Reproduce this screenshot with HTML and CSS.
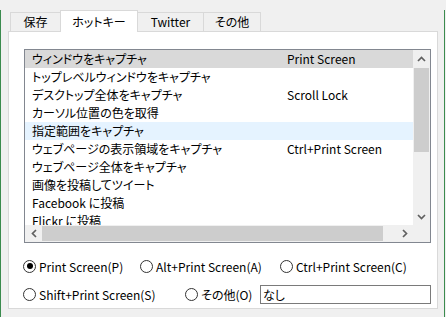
FILE: index.html
```html
<!DOCTYPE html>
<html lang="ja">

<head>
    <meta charset="UTF-8">
    <meta name="viewport" content="width=device-width, initial-scale=1.0">
    <title>ホットキー</title>
    <link rel="stylesheet" href="styles.css">
</head>

<body>
    <div class="window">
        <div class="tabs">
            <div class="tab tab-save">保存</div>
            <div class="tab tab-hotkey active">ホットキー</div>
            <div class="tab tab-twitter">Twitter</div>
            <div class="tab tab-other">その他</div>
        </div>

        <div class="panel">
            <div class="listbox">
                <div class="rows">
                    <div class="row selected"><span>ウィンドウをキャプチャ</span><span>Print Screen</span></div>
                    <div class="row"><span>トップレベルウィンドウをキャプチャ</span><span></span></div>
                    <div class="row"><span>デスクトップ全体をキャプチャ</span><span>Scroll Lock</span></div>
                    <div class="row"><span>カーソル位置の色を取得</span><span></span></div>
                    <div class="row hover"><span>指定範囲をキャプチャ</span><span></span></div>
                    <div class="row"><span>ウェブページの表示領域をキャプチャ</span><span>Ctrl+Print Screen</span></div>
                    <div class="row"><span>ウェブページ全体をキャプチャ</span><span></span></div>
                    <div class="row"><span>画像を投稿してツイート</span><span></span></div>
                    <div class="row"><span>Facebook に投稿</span><span></span></div>
                    <div class="row"><span>Flickr に投稿</span><span></span></div>
                </div>

                <!-- 縦スクロールバー -->
                <div class="vscroll">
                    <div class="sb-btn">
                        <svg width="9" height="6" viewBox="0 0 9 6"><polyline points="1,5 4.5,1.5 8,5" /></svg>
                    </div>
                    <div class="vtrack"><div class="vthumb"></div></div>
                    <div class="sb-btn">
                        <svg width="9" height="6" viewBox="0 0 9 6"><polyline points="1,1 4.5,4.5 8,1" /></svg>
                    </div>
                </div>

                <!-- 横スクロールバー -->
                <div class="hscroll">
                    <div class="sb-btn">
                        <svg width="6" height="9" viewBox="0 0 6 9"><polyline points="5,1 1.5,4.5 5,8" /></svg>
                    </div>
                    <div class="htrack"><div class="hthumb"></div></div>
                    <div class="sb-btn">
                        <svg width="6" height="9" viewBox="0 0 6 9"><polyline points="1,1 4.5,4.5 1,8" /></svg>
                    </div>
                </div>

                <div class="corner"></div>
            </div>

            <div class="options">
                <div class="opt-row">
                    <label class="opt opt-p"><span class="radio checked"></span>Print Screen(P)</label>
                    <label class="opt opt-a"><span class="radio"></span>Alt+Print Screen(A)</label>
                    <label class="opt"><span class="radio"></span>Ctrl+Print Screen(C)</label>
                </div>
                <div class="opt-row">
                    <label class="opt opt-s"><span class="radio"></span>Shift+Print Screen(S)</label>
                    <label class="opt opt-o"><span class="radio"></span>その他(O)</label>
                    <div class="textbox">なし</div>
                </div>
            </div>
        </div>
    </div>
</body>

</html>
```

FILE: styles.css
```css
* {
    box-sizing: border-box;
}

body {
    margin: 0;
    background-color: #f0f0f0;
    font-family: "Noto Sans CJK JP", "Noto Sans", sans-serif;
    font-size: 12px;
    font-feature-settings: "palt";
    color: #000000;
}

.window {
    width: 445px;
    height: 316px;
    border: 1px solid #3b8b4e;
    border-top: none;
    background-color: #f0f0f0;
}

/* タブ */
.tabs {
    display: flex;
    align-items: flex-end;
    height: 22px;
    margin: 10px 0 -1px 9px;
    position: relative;
    z-index: 1;
}

.tab {
    height: 20px;
    line-height: 18px;
    text-align: center;
    border: 1px solid #d9d9d9;
    background-color: #f0f0f0;
    margin-left: -1px;
}

.tab:first-child {
    margin-left: 0;
}

.tab.active {
    height: 22px;
    line-height: 21px;
    background-color: #ffffff;
    border-bottom: none;
    position: relative;
    z-index: 1;
}

.tab-save    { width: 51px; }
.tab-hotkey  { width: 78px; }
.tab-twitter { width: 67px; }
.tab-other   { width: 58px; }

.panel {
    width: 430px;
    height: 278px;
    margin-left: 7px;
    background-color: #ffffff;
    border: 1px solid #d9d9d9;
    padding: 17px 0 0 15px;
}

/* リスト */
.listbox {
    width: 407px;
    height: 194px;
    border: 1px solid #828790;
    display: grid;
    grid-template-columns: 388px 17px;
    grid-template-rows: 175px 17px;
    background-color: #ffffff;
}

.rows {
    overflow: hidden;
}

.row {
    display: grid;
    grid-template-columns: 255px auto;
    height: 18px;
    line-height: 18px;
    padding-left: 7px;
    white-space: nowrap;
}

.row.selected {
    background-color: #d9d9d9;
}

.row.hover {
    background-color: #e5f3ff;
}

.vscroll, .hscroll, .corner {
    background-color: #f0f0f0;
}

.vscroll {
    display: flex;
    flex-direction: column;
}

.hscroll {
    display: flex;
}

.sb-btn {
    width: 17px;
    height: 17px;
    display: flex;
    align-items: center;
    justify-content: center;
    flex: none;
}

.sb-btn svg polyline {
    fill: none;
    stroke: #606060;
    stroke-width: 1.7;
}

.vtrack {
    flex: 1;
    padding: 1px 1px 0 1px;
}

.vthumb {
    height: 84px;
    background-color: #cdcdcd;
}

.htrack {
    flex: 1;
    padding: 1px 0 1px 0;
}

.hthumb {
    width: 341px;
    height: 15px;
    background-color: #cdcdcd;
}

/* ラジオボタン */
.options {
    margin: 14px 0 0 -1px;
    display: flex;
    flex-direction: column;
    gap: 10px;
}

.opt-row {
    display: flex;
    align-items: center;
    height: 18px;
}

.opt {
    display: flex;
    align-items: center;
    gap: 3px;
    white-space: nowrap;
}

.opt-p { width: 117px; }
.opt-a { width: 140px; }
.opt-s { width: 162px; }
.opt-o { width: 75px; }

.radio {
    width: 13px;
    height: 13px;
    border: 1px solid #333333;
    border-radius: 50%;
    background-color: #ffffff;
    display: flex;
    align-items: center;
    justify-content: center;
}

.radio.checked::after {
    content: "";
    width: 6px;
    height: 6px;
    border-radius: 50%;
    background-color: #000000;
}

.textbox {
    width: 171px;
    height: 19px;
    line-height: 17px;
    border: 1px solid #7a7a7a;
    padding-left: 2px;
    margin-top: 1px;
}
```
